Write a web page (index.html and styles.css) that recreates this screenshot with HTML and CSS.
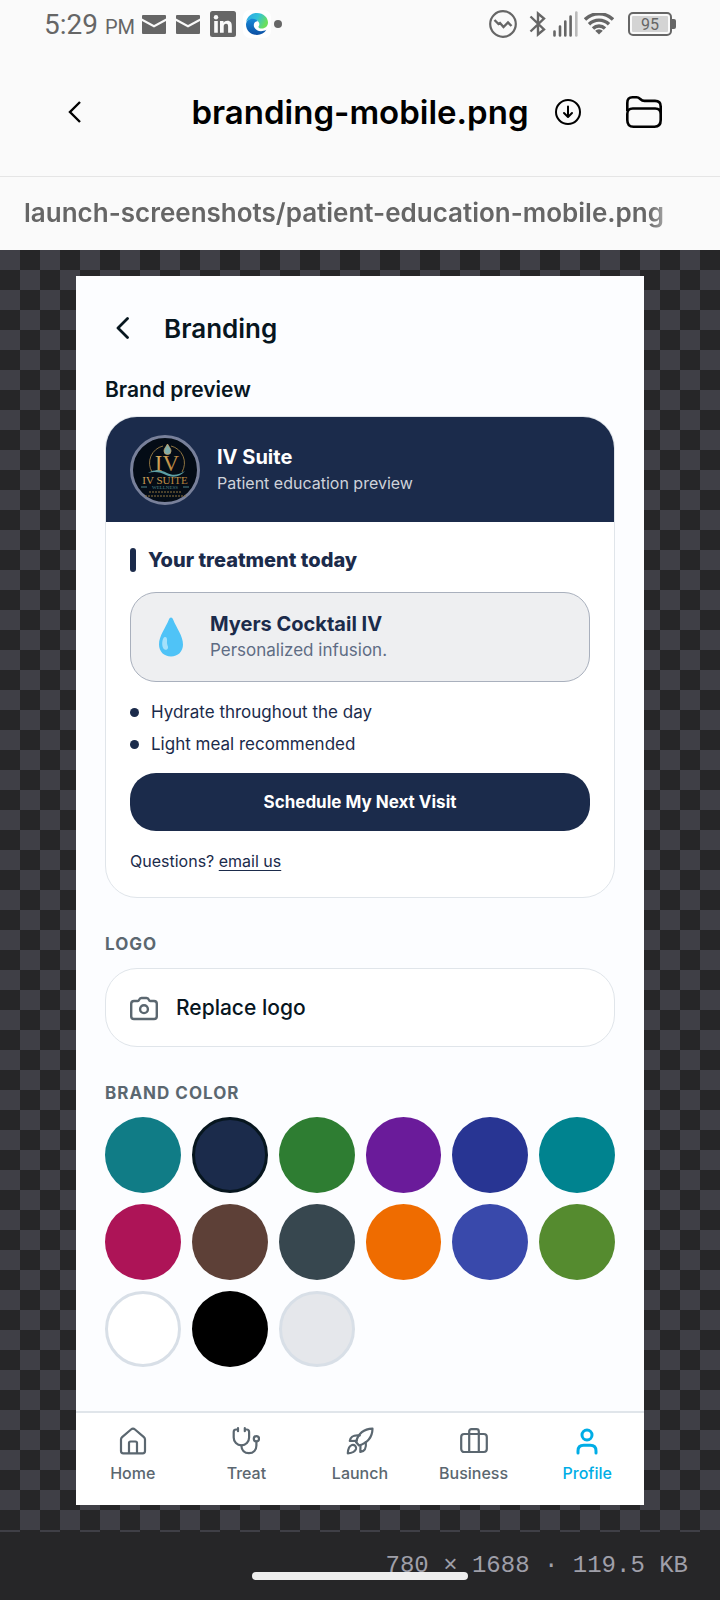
FILE: index.html
```html
<!DOCTYPE html>
<html lang="en">
<head>
    <meta charset="UTF-8">
    <meta name="viewport" content="width=device-width, initial-scale=1.0">
    <title>branding-mobile.png</title>
    <link rel="stylesheet" href="styles.css">
</head>
<body>
    <div class="status-bar">
        <div class="status-left">
            <span class="clock">5:29 <small>PM</small></span>
            <svg class="icon-mail" width="24" height="19" viewBox="0 0 24 19" fill="#666"><path d="M1 0h22a1 1 0 0 1 1 1v2.500L12 10 0 3.500V1a1 1 0 0 1 1-1z"/><path d="M0 6l12 6.500L24 6v12a1 1 0 0 1-1 1H1a1 1 0 0 1-1-1z"/></svg>
            <svg class="icon-mail" width="24" height="19" viewBox="0 0 24 19" fill="#666"><path d="M1 0h22a1 1 0 0 1 1 1v2.500L12 10 0 3.500V1a1 1 0 0 1 1-1z"/><path d="M0 6l12 6.500L24 6v12a1 1 0 0 1-1 1H1a1 1 0 0 1-1-1z"/></svg>
            <svg width="26" height="26" viewBox="0 0 26 26"><rect width="26" height="26" rx="2.500" fill="#666"/><circle cx="6" cy="6.300" r="2.200" fill="#fafafa"/><path d="M4.200 10h3.600v11.800H4.200zM10 10h3.500v1.700c.8-1.300 2-2 3.800-2 3.600 0 4.500 2.300 4.500 5.400v6.700h-3.700v-6c0-1.500-.1-3-2-3s-2.400 1.400-2.400 3v6H10z" fill="#fafafa"/></svg>
            <svg width="28" height="28" viewBox="0 0 28 28">
                <defs>
                    <linearGradient id="edgeTop" x1="0" y1="0" x2="1" y2=".4"><stop offset="0" stop-color="#2fa4e8"/><stop offset=".55" stop-color="#33c3d8"/><stop offset="1" stop-color="#6bdf5c"/></linearGradient>
                    <linearGradient id="edgeLow" x1="0" y1="0" x2="0" y2="1"><stop offset="0" stop-color="#1689d8"/><stop offset="1" stop-color="#0c4fa3"/></linearGradient>
                </defs>
                <rect width="28" height="28" rx="7" fill="#fff"/>
                <path d="M3.200 12C4 6.500 8.500 3 14 3c6.500 0 11 4.500 11 9.500 0 3.700-3 6-6 6-2.500 0-4-1-3.500-2 1.500-1.500 1.200-5-2.500-6.500-4-1.500-8-.5-9.800 2z" fill="url(#edgeTop)"/>
                <path d="M3 14.500C3.200 11 6 8.800 9.500 8.800c2.500 0 4.600 1 5.300 2.500-3.300-.3-5 3.200-3.400 6.200 2 3.800 7 5 12 2.300C21.500 23 18 25 14 25 8 25 3 20.500 3 14.500z" fill="url(#edgeLow)"/>
            </svg>
            <span class="more-dot"></span>
        </div>
        <div class="status-right">
            <svg width="28" height="28" viewBox="0 0 28 28" fill="none" stroke="#666" stroke-width="2.200"><circle cx="14" cy="14" r="12.800"/><path d="M5.500 10l4 4 1.500-1 3.500 4 4.500-4.500 3.500 3.500" stroke-width="2.400"/></svg>
            <svg class="icon-bt" width="18" height="26" viewBox="0 0 18 26" fill="none" stroke="#666" stroke-width="2.400"><path d="M1.500 5.500L15 18.500 9 23.500V2.500l6 5L1.500 20.500"/></svg>
            <svg class="icon-signal" width="25" height="26" viewBox="0 0 25 26" stroke="#666" stroke-width="2.600" stroke-linecap="round"><path d="M1.500 20.500v4M7 15.500v9M12.300 10.500v14M17.600 5.500v19"/><path d="M23.300 1.500v23" stroke="#bbb"/></svg>
            <svg class="icon-wifi" width="30" height="22" viewBox="0 0 30 22" fill="none" stroke="#666" stroke-width="3.400"><path d="M1 6.500a20 20 0 0 1 28 0"/><path d="M5 11.200a14.300 14.300 0 0 1 20 0"/><path d="M9 15.500a8.600 8.600 0 0 1 12 0"/><path d="M15 21.500l-3.800-3.800a5.500 5.500 0 0 1 7.600 0z" fill="#666" stroke="none"/></svg>
            <span class="battery"><span>95</span></span>
        </div>
    </div>

    <header class="file-header">
        <a href="#" class="back-link" aria-label="Back">
            <svg width="14" height="24" viewBox="0 0 14 24" fill="none" stroke="#000" stroke-width="2.400"><path d="M12 2L2 12l10 10"/></svg>
        </a>
        <h1>branding-mobile.png</h1>
        <div class="header-actions">
            <button type="button" aria-label="Download">
                <svg width="26" height="26" viewBox="0 0 26 26" fill="none" stroke="#000" stroke-width="2" stroke-linecap="round" stroke-linejoin="round"><circle cx="13" cy="13" r="12"/><path d="M13 7.500v10M9 14l4 4 4-4"/></svg>
            </button>
            <button type="button" aria-label="Files">
                <svg width="36" height="32" viewBox="0 0 36 32" fill="none" stroke="#000" stroke-width="2.600" stroke-linejoin="round"><path d="M1.300 15V7C1.300 3 3 1.300 6.500 1.300h4c4 0 3.500 3.600 8 3.600H29c4 0 5.700 2 5.700 5.500V24c0 4.500-2 6.700-6.200 6.700h-21c-4.200 0-6.200-2.200-6.200-6.700v-6c0-3.600 1.800-5.500 5.500-5.500h22.400c3.700 0 5.500 1.900 5.500 5.500"/></svg>
            </button>
        </div>
    </header>

    <div class="file-path">launch-screenshots/patient-education-mobile.png</div>

    <main class="canvas">
        <div class="screen">
            <div class="screen-body">
                <div class="screen-title">
                    <a href="#" aria-label="Back">
                        <svg width="14" height="22" viewBox="0 0 14 22" fill="none" stroke="#07161f" stroke-width="2.800" stroke-linecap="round" stroke-linejoin="round"><path d="M11.500 1.500L2 11l9.500 9.500"/></svg>
                    </a>
                    <h2>Branding</h2>
                </div>

                <h3 class="preview-title">Brand preview</h3>
                <section class="preview-card">
                    <div class="preview-head">
                        <svg class="avatar" viewBox="0 0 70 70">
                            <defs><linearGradient id="gold" x1="0" y1="0" x2="1" y2="1"><stop offset="0" stop-color="#e0b565"/><stop offset="1" stop-color="#a8742f"/></linearGradient></defs>
                            <circle cx="35" cy="35" r="33.500" fill="#040c16" stroke="#78809a" stroke-width="3"/>
                            <path d="M22 37a17.500 17.500 0 0 1 11-26M41 11a17.500 17.500 0 0 1 11 26" fill="none" stroke="#8f7440" stroke-width="1"/>
                            <path d="M37.500 9c2 3.500 3.500 5 3.500 7a3.500 3.500 0 0 1-7 0c0-2 1.500-3.500 3.500-7z" fill="#7faeac" stroke="#c9a568" stroke-width=".8"/>
                            <text x="37" y="36" class="logo-mark">IV</text>
                            <path d="M18 38c7-4 13-3 19 0s12 2 18-2c-5 6-12 7-19 4-6-3-11-4-18-2z" fill="#5c9fa5"/>
                            <text x="35" y="49" class="logo-name">IV SUITE</text>
                            <path d="M11 52h6M53 52h6" stroke="#4d8288" stroke-width="1"/>
                            <text x="35" y="54" class="logo-sub">WELLNESS</text>
                            <path d="M19 57h33M15 61h41" stroke="#8f7440" stroke-width="1" stroke-dasharray="2 1"/>
                        </svg>
                        <div>
                            <strong>IV Suite</strong>
                            <p>Patient education preview</p>
                        </div>
                    </div>
                    <div class="preview-body">
                        <h4>Your treatment today</h4>
                        <div class="treatment">
                            <svg class="drop" width="24" height="40" viewBox="0 0 24 40"><path d="M12 .5c1 0 1.600.8 2.100 2C17.500 11 24 19 24 27.500 24 34.500 19 39.500 12 39.500S0 34.500 0 27.500C0 19 6.500 11 9.900 2.500c.5-1.200 1.100-2 2.100-2z" fill="#4fc3f7"/><path d="M6 20c2 0 2.300 2 2 5s1.800 4.500.8 6.500-3.600 1.500-4.800-.8C2.300 27 3.500 20 6 20z" fill="#a5e1fb"/></svg>
                            <div>
                                <strong>Myers Cocktail IV</strong>
                                <p>Personalized infusion.</p>
                            </div>
                        </div>
                        <ul>
                            <li>Hydrate throughout the day</li>
                            <li>Light meal recommended</li>
                        </ul>
                        <button type="button" class="btn-schedule">Schedule My Next Visit</button>
                        <p class="questions">Questions? <a href="#">email us</a></p>
                    </div>
                </section>

                <h3 class="section-label">Logo</h3>
                <button type="button" class="btn-logo">
                    <svg width="28" height="28" viewBox="0 0 28 28" fill="none" stroke="#5b6770" stroke-width="2.400" stroke-linejoin="round"><path d="M4 7h3.800c.8 0 1-.4 1.300-1.200.5-1.400 1.100-1.800 2.400-1.800h5c1.300 0 1.900.4 2.400 1.800.3.800.5 1.200 1.300 1.200H24c1.800 0 2.800 1 2.800 2.800v12.400c0 1.800-1 2.800-2.800 2.800H4c-1.800 0-2.800-1-2.800-2.800V9.800C1.200 8 2.200 7 4 7z"/><circle cx="14" cy="15.200" r="3.900"/></svg>
                    Replace logo
                </button>

                <h3 class="section-label">Brand color</h3>
                <div class="swatches">
                    <input type="radio" name="color" class="swatch teal" aria-label="Teal">
                    <input type="radio" name="color" class="swatch navy" aria-label="Navy" checked>
                    <input type="radio" name="color" class="swatch green" aria-label="Green">
                    <input type="radio" name="color" class="swatch purple" aria-label="Purple">
                    <input type="radio" name="color" class="swatch indigo" aria-label="Indigo">
                    <input type="radio" name="color" class="swatch cyan" aria-label="Cyan">
                    <input type="radio" name="color" class="swatch pink" aria-label="Pink">
                    <input type="radio" name="color" class="swatch brown" aria-label="Brown">
                    <input type="radio" name="color" class="swatch slate" aria-label="Slate">
                    <input type="radio" name="color" class="swatch orange" aria-label="Orange">
                    <input type="radio" name="color" class="swatch blue" aria-label="Blue">
                    <input type="radio" name="color" class="swatch olive" aria-label="Olive">
                    <input type="radio" name="color" class="swatch white" aria-label="White">
                    <input type="radio" name="color" class="swatch black" aria-label="Black">
                    <input type="radio" name="color" class="swatch gray" aria-label="Gray">
                </div>
            </div>

            <nav class="tab-bar">
                <a href="#">
                    <svg width="28" height="28" viewBox="0 0 28 28"><path d="M2 12.500c0-1 .3-1.700 1.100-2.400L12 2.500c1.300-1.100 2.700-1.100 4 0l8.900 7.600c.8.700 1.100 1.400 1.100 2.400V24c0 1.500-.8 2.300-2.300 2.300H4.300C2.800 26.300 2 25.500 2 24z"/><path d="M10 26V16c0-1 .5-1.500 1.500-1.500h5c1 0 1.500.5 1.500 1.500v10"/></svg>
                    Home
                </a>
                <a href="#">
                    <svg width="28" height="28" viewBox="0 0 28 28"><path d="M6 1.200v3M12.800 1.200v3M6 2.500H4.200C2.500 2.500 1.700 3.300 1.700 5v5.500c0 4.500 3.300 7.800 7.700 7.800s7.700-3.300 7.700-7.800V5c0-1.700-.8-2.500-2.500-2.500h-1.800"/><path d="M9.400 18.500c0 4.800 3.200 7.700 7.500 7.700 4.600 0 7.500-3.200 7.500-7.700v-4"/><circle cx="24.400" cy="11.700" r="2.600"/></svg>
                    Treat
                </a>
                <a href="#">
                    <svg width="28" height="28" viewBox="0 0 28 28"><path d="M10 15c2-7.500 7.500-13 16.500-13.300C26.300 10.500 20.800 16 13 18.500z"/><path d="M10.800 13.800l-7 .2c.7-4.300 3-6.300 10-5.500M14.500 18l-.2 7c4.300-.7 6.300-3 5.500-10M6 18c-3 1-4 4.500-4.200 8.300C5.600 26 9 25 10 22c.6-2.500-1.500-4.600-4-4z"/></svg>
                    Launch
                </a>
                <a href="#">
                    <svg width="28" height="28" viewBox="0 0 28 28"><rect x="1.200" y="7" width="25.600" height="18" rx="3"/><path d="M9.200 25V4.500c0-1.600.8-2.300 2.300-2.300h5c1.500 0 2.300.7 2.300 2.300V25"/></svg>
                    Business
                </a>
                <a href="#" class="active">
                    <svg width="28" height="28" viewBox="0 0 28 28"><circle cx="14" cy="8" r="5"/><path d="M5 26v-2c0-3.600 2-5.700 5.700-5.700h6.600c3.700 0 5.700 2.100 5.700 5.700v2"/></svg>
                    Profile
                </a>
            </nav>
        </div>
    </main>

    <footer class="file-info">
        780 × 1688 · 119.5 KB
        <span class="home-indicator"></span>
    </footer>
</body>
</html>
```
FILE: styles.css
```css
* {
    margin: 0;
    padding: 0;
    box-sizing: border-box;
}

body {
    display: flex;
    flex-direction: column;
    min-height: 100vh;
    background: #fafafa;
    font-family: Inter, Roboto, sans-serif;
}

button {
    border: none;
    background: none;
    font-family: inherit;
    cursor: pointer;
}

a {
    color: inherit;
    text-decoration: none;
}

svg {
    display: block;
    flex-shrink: 0;
}

/* Phone status bar */
.status-bar {
    display: flex;
    justify-content: space-between;
    align-items: center;
    height: 48px;
    padding: 0 44px;
    color: #666;
    font-family: Roboto, sans-serif;
}

.status-left,
.status-right {
    display: flex;
    align-items: center;
}

.status-left {
    gap: 7px;
}

.clock {
    font-size: 28px;
}

.clock small {
    font-size: 20px;
}

.icon-mail {
    margin-right: 3px;
}

.more-dot {
    width: 8px;
    height: 8px;
    margin-left: -4px;
    border-radius: 50%;
    background: #666;
}

.status-right {
    gap: 6px;
}

.icon-bt {
    margin-left: 6px;
}

.battery {
    display: flex;
    align-items: center;
    margin-left: 8px;
}

.battery span {
    width: 44px;
    height: 24px;
    padding: 2px;
    border: 2px solid #666;
    border-radius: 5px;
    background: #d4d4d4;
    background-clip: content-box;
    font-size: 16px;
    line-height: 17px;
    text-align: center;
}

.battery::after {
    content: "";
    width: 4px;
    height: 10px;
    border-radius: 0 2px 2px 0;
    background: #666;
}

/* File header */
.file-header {
    display: grid;
    grid-template-columns: 1fr auto 1fr;
    align-items: center;
    height: 129px;
    padding: 0 58px;
    border-bottom: 1px solid #e5e5e5;
}

.back-link {
    padding-left: 10px;
}

.file-header h1 {
    font-size: 33px;
    font-weight: 600;
    line-height: 44px;
}

.header-actions {
    display: flex;
    justify-content: space-between;
    align-items: center;
    padding-left: 26px;
}

.file-path {
    height: 73px;
    padding: 0 24px;
    overflow: hidden;
    color: #666;
    font-size: 26px;
    font-weight: 600;
    line-height: 72px;
    white-space: nowrap;
    mask-image: linear-gradient(to right, #000 calc(100% - 72px), transparent calc(100% - 32px));
}

/* Checkered canvas with the picture on it */
.canvas {
    flex: 1;
    padding: 26px 76px;
    background: repeating-conic-gradient(#262628 0 25%, #3f3f46 0 50%) 0 0 / 40px 40px;
}

.screen {
    background: #fcfdff;
    color: #07161f;
}

.screen-body {
    padding: 29px 29px 44px;
}

.screen-title {
    display: flex;
    align-items: center;
    gap: 34px;
    height: 46px;
    padding-left: 11px;
}

.screen-title h2 {
    font-size: 26px;
    font-weight: 600;
}

.preview-title {
    margin: 26px 0 13px;
    font-size: 21px;
    font-weight: 600;
    line-height: 26px;
}

.preview-card {
    overflow: hidden;
    border: 1px solid #e0e5ea;
    border-radius: 32px;
    background: #fff;
    color: #1b2b4b;
}

.preview-head {
    display: flex;
    align-items: center;
    gap: 17px;
    padding: 18px 24px 17px;
    background: #1b2b4b;
    color: #fff;
}

.avatar {
    width: 70px;
    height: 70px;
}

.logo-mark,
.logo-name,
.logo-sub {
    fill: url(#gold);
    font-family: "Liberation Serif", serif;
    text-anchor: middle;
}

.logo-mark {
    font-size: 23px;
}

.logo-name {
    font-size: 11px;
}

.logo-sub {
    fill: #4d8288;
    font-size: 5px;
}

.preview-card strong {
    display: block;
    font-size: 20px;
    font-weight: 700;
    line-height: 26px;
}

.preview-head p {
    color: #ced2da;
    font-size: 16px;
    line-height: 26px;
}

.preview-body {
    padding: 24px;
}

.preview-body h4 {
    display: flex;
    align-items: center;
    gap: 12px;
    font-size: 20px;
    font-weight: 800;
    line-height: 28px;
}

.preview-body h4::before {
    content: "";
    width: 6px;
    height: 24px;
    border-radius: 3px;
    background: #1b2b4b;
}

.treatment {
    display: flex;
    align-items: center;
    gap: 27px;
    margin: 18px 0;
    padding: 18px 28px;
    border: 1px solid #a9b0bd;
    border-radius: 26px;
    background: #eeeff1;
}

.treatment p {
    color: #5e6c84;
    font-size: 17px;
    line-height: 26px;
}

.preview-body ul {
    list-style: none;
}

.preview-body li {
    display: flex;
    align-items: center;
    gap: 12px;
    margin-bottom: 8px;
    font-size: 17px;
    line-height: 24px;
}

.preview-body li::before {
    content: "";
    width: 9px;
    height: 9px;
    border-radius: 50%;
    background: #1b2b4b;
}

.btn-schedule {
    width: 100%;
    height: 58px;
    margin: 9px 0 18px;
    border-radius: 26px;
    background: #1b2b4b;
    color: #fff;
    font-size: 17px;
    font-weight: 700;
}

.questions {
    font-size: 16px;
    line-height: 24px;
}

.questions a {
    text-decoration: underline;
    text-underline-offset: 3px;
}

.section-label {
    margin: 34px 0 12px;
    color: #5b6770;
    font-size: 17px;
    font-weight: 700;
    letter-spacing: 1px;
    line-height: 24px;
    text-transform: uppercase;
}

.btn-logo {
    display: flex;
    align-items: center;
    gap: 18px;
    width: 100%;
    height: 79px;
    padding: 0 24px;
    border: 1px solid #e0e5ea;
    border-radius: 32px;
    background: #fff;
    color: #07161f;
    font-size: 21px;
    font-weight: 500;
}

.swatches {
    display: grid;
    grid-template-columns: repeat(6, 1fr);
    gap: 11px;
}

.swatch {
    appearance: none;
    aspect-ratio: 1;
    border-radius: 50%;
    cursor: pointer;
}

.swatch:checked {
    border: 3px solid #07161f;
}

.teal { background: #107c86; }
.navy { background: #1b2b4b; }
.green { background: #2e7d32; }
.purple { background: #6a1b9a; }
.indigo { background: #283593; }
.cyan { background: #00838f; }
.pink { background: #ad1457; }
.brown { background: #5d4037; }
.slate { background: #37474f; }
.orange { background: #ef6c00; }
.blue { background: #3949ab; }
.olive { background: #558b2f; }
.black { background: #000; }

.white,
.gray {
    border: 3px solid #d8dfe7;
    background: #fff;
}

.gray {
    background: #e5e7eb;
}

/* Bottom tabs */
.tab-bar {
    display: grid;
    grid-template-columns: repeat(5, 1fr);
    padding: 14px 0 20px;
    border-top: 2px solid #e0e5ea;
    background: #fff;
}

.tab-bar a {
    display: flex;
    flex-direction: column;
    align-items: center;
    gap: 6px;
    color: #5b6770;
    font-size: 16px;
    font-weight: 500;
    line-height: 24px;
}

.tab-bar svg {
    fill: none;
    stroke: currentColor;
    stroke-width: 2.2;
    stroke-linecap: round;
    stroke-linejoin: round;
}

.tab-bar .active {
    color: #00ade6;
}

.tab-bar .active svg {
    stroke-width: 3;
}

.file-info {
    position: relative;
    height: 68px;
    padding: 0 32px;
    background: #262628;
    color: #9f9fa9;
    font-family: "Liberation Mono", monospace;
    font-size: 24px;
    line-height: 68px;
    text-align: right;
}

.home-indicator {
    position: absolute;
    bottom: 20px;
    left: 35%;
    width: 30%;
    height: 8px;
    border-radius: 4px;
    background: #eee;
}
```
